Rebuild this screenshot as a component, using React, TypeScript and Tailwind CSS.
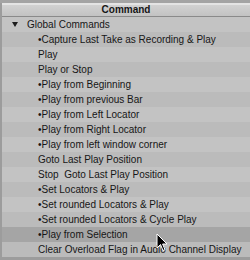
const rows: { label: string; level: number; selected?: boolean }[] = [
  { label: 'Global Commands', level: 0 },
  { label: '•Capture Last Take as Recording & Play', level: 1 },
  { label: 'Play', level: 1 },
  { label: 'Play or Stop', level: 1 },
  { label: '•Play from Beginning', level: 1 },
  { label: '•Play from previous Bar', level: 1 },
  { label: '•Play from Left Locator', level: 1 },
  { label: '•Play from Right Locator', level: 1 },
  { label: '•Play from left window corner', level: 1 },
  { label: 'Goto Last Play Position', level: 1 },
  { label: 'Stop  Goto Last Play Position', level: 1 },
  { label: '•Set Locators & Play', level: 1 },
  { label: '•Set rounded Locators & Play', level: 1 },
  { label: '•Set rounded Locators & Cycle Play', level: 1 },
  { label: '•Play from Selection', level: 1, selected: true },
  { label: 'Clear Overload Flag in Audio Channel Display', level: 1 },
]

export default function App() {
  return (
    <div className="w-[250px] h-[260px] overflow-hidden bg-[#9c9c9c] flex flex-col font-['Liberation_Sans',sans-serif] text-[#161616]">
      {/* header */}
      <div className="h-[3px] bg-[#a4a4a4]" />
      <div className="h-[2px] bg-[#e4e4e4] ml-[2px]" />
      <div className="h-[11px] ml-[2px] bg-gradient-to-b from-[#d2d2d2] to-[#c2c2c2] flex items-center justify-center text-[10px] font-bold leading-none pb-[1px]">
        Command
      </div>
      <div className="h-px bg-[#8a8a8a] ml-[2px]" />

      {/* rows */}
      <div className="relative flex flex-col ml-[2px]">
        {rows.map((r, i) => (
          <div
            key={r.label}
            className={`h-[15px] flex items-center text-[10px] leading-none whitespace-pre ${
              r.selected ? 'bg-[#a5a5a5]' : i % 2 === 0 ? 'bg-[#c3c3c3]' : 'bg-[#bbbbbb]'
            }`}
          >
            {r.level === 0 ? (
              <>
                <svg width="6" height="5" viewBox="0 0 6 5" className="ml-[10px] mr-[9px]">
                  <path d="M0 0 L6 0 L3 5 Z" fill="#1c1c1c" />
                </svg>
                <span>{r.label}</span>
              </>
            ) : (
              <span className="pl-[36px]">{r.label}</span>
            )}
          </div>
        ))}

        {/* mouse pointer */}
        <svg width="13" height="20" viewBox="0 0 13 20" className="absolute left-[154px] top-[216px]">
          <path d="M1 1 L1 15 L4.5 11.5 L7 17.5 L9 16.7 L6.6 11 L11 11 Z" fill="#000" stroke="#fff" strokeWidth="1" strokeLinejoin="round" />
        </svg>
      </div>
    </div>
  )
}
